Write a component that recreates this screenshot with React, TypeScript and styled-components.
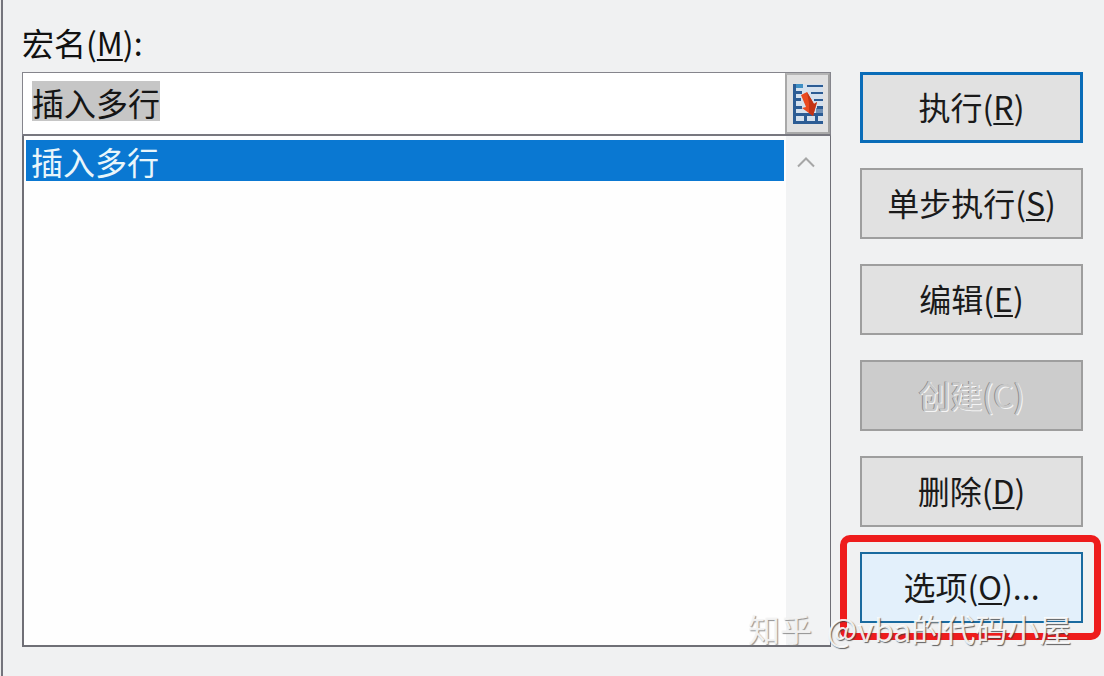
import { createGlobalStyle } from "styled-components";
import styled from "styled-components";

const Global = createGlobalStyle`
    html, body {
        margin: 0;
        padding: 0;
        background: #f0f0f0;
    }
`;

const Dialog = styled.div`
    position: relative;
    box-sizing: border-box;
    width: 1104px;
    height: 676px;
    overflow: hidden;
    padding: 0 21px 0 21px;
    display: flex;
    gap: 29px;
    background: #f0f1f2;
    border-left: 1px solid #ececec;
    box-shadow: inset 2px 0 0 #74747c;
    font-family: "Noto Sans CJK SC", "Liberation Sans", sans-serif;
    color: #111;
`;

const LeftColumn = styled.div`
    width: 809px;
    flex-shrink: 0;
`;

const MacroLabel = styled.div`
    height: 72px;
    box-sizing: border-box;
    padding-top: 22px;
    font-size: 32px;
    line-height: 40px;
`;

const Key = styled.span`
    text-decoration: underline;
    text-underline-offset: 3px;
    text-decoration-thickness: 2px;
`;

const NameRow = styled.div`
    height: 64px;
    box-sizing: border-box;
    display: flex;
    border: 1px solid #85858c;
    border-bottom: 2px solid #77777f;
    background: #fff;
`;

const NameField = styled.div`
    flex: 1;
    padding: 8px 0 0 9px;
`;

const SelectedName = styled.span`
    display: inline-block;
    height: 40px;
    background: #c6c6c6;
    font-size: 32px;
    line-height: 42px;
    color: #151515;
`;

const PickerButton = styled.div`
    width: 45px;
    box-sizing: border-box;
    display: flex;
    align-items: center;
    justify-content: center;
    background: #e1e1e1;
    border: 2px solid #a9a9a9;
    border-top-color: #b5b5b5;
    border-right-color: #a0a0a0;
`;

const ListBox = styled.div`
    height: 511px;
    box-sizing: border-box;
    display: flex;
    border: 2px solid #6f6f76;
    border-top: 0;
    border-right-width: 1px;
    background: #fefefe;
`;

const Items = styled.div`
    flex: 1;
    padding: 4px 2px 0 2px;
`;

const SelectedItem = styled.div`
    height: 41px;
    padding-left: 5px;
    background: #0a78d2;
    color: #e9f6fb;
    font-size: 32px;
    line-height: 43px;
`;

const Scrollbar = styled.div`
    width: 44px;
    flex-shrink: 0;
    background: #f2f3f4;
    display: flex;
    justify-content: center;
    padding: 20px 4px 0 0;
    box-sizing: border-box;
`;

const Buttons = styled.div`
    width: 223px;
    flex-shrink: 0;
    padding-top: 72px;
    display: flex;
    flex-direction: column;
    gap: 25px;
`;

const Button = styled.div<{ $variant?: "default" | "disabled" | "hover" }>`
    height: 71px;
    box-sizing: border-box;
    padding-bottom: 4px;
    display: flex;
    align-items: center;
    justify-content: center;
    font-size: 32px;
    border: ${(p) =>
        p.$variant === "default"
            ? "3px solid #0a6cb8"
            : p.$variant === "hover"
              ? "2px solid #1a6a9f"
              : "2px solid #9e9e9e"};
    background: ${(p) =>
        p.$variant === "disabled"
            ? "#cccccc"
            : p.$variant === "hover"
              ? "#e3f0fb"
              : "#e1e1e1"};
    color: ${(p) => (p.$variant === "disabled" ? "#c9c9c9" : "#1a1a1a")};
    text-shadow: ${(p) =>
        p.$variant === "disabled" ? "1px 1px 0 #f5f5f5, -1px 0 0 #8f8f8f" : "none"};
`;

const Highlight = styled.div`
    position: absolute;
    left: 839px;
    top: 535px;
    width: 261px;
    height: 105px;
    box-sizing: border-box;
    border: 7px solid #ee1c1c;
    border-radius: 10px;
`;

const Watermark = styled.div`
    position: absolute;
    left: 747px;
    top: 608px;
    font-size: 32px;
    line-height: 40px;
    white-space: nowrap;
    color: rgba(255, 255, 255, 0.9);
    text-shadow: 1px 1px 1px rgba(60, 60, 60, 0.8);
`;

const WatermarkBrand = styled.span`
    margin-right: 15px;
    color: rgba(245, 245, 245, 0.95);
    text-shadow: 1px 1px 1px rgba(120, 120, 120, 0.8);
`;

const PickerSvg = styled.svg`
    filter: blur(0.5px);
`;

const PickerIcon = () => (
    <PickerSvg width="30" height="40" viewBox="0 0 30 40">
        <rect width="30" height="40" fill="#d5e1ee" />
        <g fill="#2c5c94">
            <rect x="0" y="0" width="10" height="4" fill="#3f8fc4" />
            <rect x="14" y="1" width="16" height="2" />
            <rect x="0" y="7" width="9" height="3" />
            <rect x="18" y="8" width="12" height="2" />
            <rect x="0" y="14" width="8" height="3" />
            <rect x="21" y="15" width="9" height="2" />
            <rect x="0" y="22" width="9" height="3" />
            <rect x="24" y="22" width="6" height="3" />
            <rect x="0" y="29" width="30" height="3" />
            <rect x="0" y="37" width="30" height="3" />
            <rect x="0" y="0" width="3" height="40" />
            <rect x="11" y="30" width="3" height="10" />
            <rect x="22" y="30" width="3" height="10" />
            <rect x="23" y="24" width="7" height="5" opacity="0.6" />
        </g>
        <path d="M8 11 L14 8 L21 20 L24 18 L20 32 L9 24 L13 23 Z" fill="#ea4a20" />
        <path d="M14 8 L21 20 L24 18 L20 32 L16 29 L16 19 Z" fill="#c23416" />
    </PickerSvg>
);

const ChevronUp = () => (
    <svg width="20" height="12" viewBox="0 0 20 12">
        <path d="M2 10.5 L10 2.5 L18 10.5" fill="none" stroke="#a6a6a6" strokeWidth="2" />
    </svg>
);

export default function App() {
    return (
        <>
            <Global />
            <Dialog>
                <LeftColumn>
                    <MacroLabel>
                        宏名(<Key>M</Key>):
                    </MacroLabel>
                    <NameRow>
                        <NameField>
                            <SelectedName>插入多行</SelectedName>
                        </NameField>
                        <PickerButton>
                            <PickerIcon />
                        </PickerButton>
                    </NameRow>
                    <ListBox>
                        <Items>
                            <SelectedItem>插入多行</SelectedItem>
                        </Items>
                        <Scrollbar>
                            <ChevronUp />
                        </Scrollbar>
                    </ListBox>
                </LeftColumn>
                <Buttons>
                    <Button $variant="default">
                        <span>执行(<Key>R</Key>)</span>
                    </Button>
                    <Button>
                        <span>单步执行(<Key>S</Key>)</span>
                    </Button>
                    <Button>
                        <span>编辑(<Key>E</Key>)</span>
                    </Button>
                    <Button $variant="disabled">
                        <span>创建(C)</span>
                    </Button>
                    <Button>
                        <span>删除(<Key>D</Key>)</span>
                    </Button>
                    <Button $variant="hover">
                        <span>选项(<Key>O</Key>)...</span>
                    </Button>
                </Buttons>
                <Highlight />
                <Watermark>
                    <WatermarkBrand>知乎</WatermarkBrand>@vba的代码小屋
                </Watermark>
            </Dialog>
        </>
    );
}
